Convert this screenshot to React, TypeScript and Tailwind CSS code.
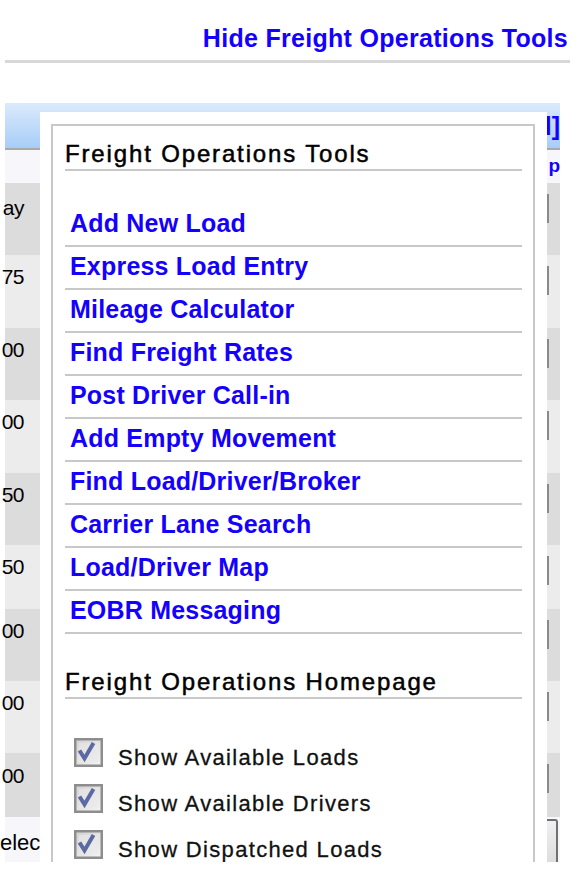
import React from "react";

const links = [
  "Add New Load",
  "Express Load Entry",
  "Mileage Calculator",
  "Find Freight Rates",
  "Post Driver Call-in",
  "Add Empty Movement",
  "Find Load/Driver/Broker",
  "Carrier Lane Search",
  "Load/Driver Map",
  "EOBR Messaging",
];

const checks = ["Show Available Loads", "Show Available Drivers", "Show Dispatched Loads"];

const rows = [
  { h: "h-[72px]", bg: "bg-[#dcdcdc]", pt: "pt-[14px]", t: "ay" },
  { h: "h-[73px]", bg: "bg-[#ececec]", pt: "pt-[11px]", t: "75" },
  { h: "h-[72px]", bg: "bg-[#dcdcdc]", pt: "pt-[11px]", t: "00" },
  { h: "h-[73px]", bg: "bg-[#ececec]", pt: "pt-[11px]", t: "00" },
  { h: "h-[72px]", bg: "bg-[#dcdcdc]", pt: "pt-[11px]", t: "50" },
  { h: "h-[64px]", bg: "bg-[#ececec]", pt: "pt-[11px]", t: "50" },
  { h: "h-[72px]", bg: "bg-[#dcdcdc]", pt: "pt-[11px]", t: "00" },
  { h: "h-[72px]", bg: "bg-[#ececec]", pt: "pt-[11px]", t: "00" },
  { h: "h-[64px]", bg: "bg-[#dcdcdc]", pt: "pt-[12px]", t: "00" },
];

function CheckBox() {
  return (
    <svg width="29" height="29" viewBox="0 0 29 29" className="shrink-0 block">
      <defs>
        <linearGradient id="cbg" x1="0" y1="0" x2="1" y2="1">
          <stop offset="0" stopColor="#d2d2d2" />
          <stop offset="1" stopColor="#f4f4f4" />
        </linearGradient>
      </defs>
      <rect x="1.25" y="1.25" width="26.5" height="26.5" fill="url(#cbg)" stroke="#8d8d8d" strokeWidth="2.5" />
      <rect x="5" y="5" width="19" height="19" fill="#e9e9e9" opacity="0.6" />
      <path d="M5.5 12.5 L10.5 20.5 L19.5 5" fill="none" stroke="#5c6aa4" strokeWidth="4" strokeLinejoin="miter" />
    </svg>
  );
}

export default function App() {
  return (
    <div className="w-[584px] h-[873px] bg-white overflow-hidden font-['Liberation_Sans',Arial,sans-serif]">
      <div className="relative h-[862px] overflow-hidden">
        <div className="flex justify-end pt-[26px] pr-[16px]">
          <a className="text-[25px] leading-[25px] font-bold text-[#1400ff] tracking-[0.3px] whitespace-nowrap">
            Hide Freight Operations Tools
          </a>
        </div>
        <div className="mt-[9px] ml-[5px] w-[565px] h-[3px] bg-[#d8d8d8]" />

        <div className="mt-[40px] ml-[5px] w-[555px]">
          <div className="h-[47px] bg-gradient-to-b from-[#dbeafc] to-[#a7cdf8] border-b-2 border-[#a9a9a9] flex justify-end">
            <div className="w-[13px] flex justify-end pt-[11px]">
              <span className="text-[25px] leading-[25px] font-bold text-[#1400ff] whitespace-nowrap">l]</span>
            </div>
          </div>
          <div className="h-[33px] bg-[#f6f6fb] flex justify-end">
            <div className="w-[13px] flex justify-end pt-[6px]">
              <span className="text-[19px] leading-[19px] font-bold text-[#1400ff] whitespace-nowrap">p</span>
            </div>
          </div>
          {rows.map((r, i) => (
            <div key={i} className={`${r.h} ${r.bg} flex`}>
              <div className={`w-[19px] flex justify-end ${r.pt}`}>
                <span className="text-[21px] leading-[21px] tracking-[-0.5px] text-black whitespace-nowrap">{r.t}</span>
              </div>
              <div className="flex-1" />
              <div className="w-[13px]">
                <div className="mt-[11px] w-[2px] h-[29px] bg-[#8a8a8a]" />
              </div>
            </div>
          ))}
          <div className="h-[45px] bg-[#f6f6fb] flex">
            <div className="w-[35px] pt-[15px] -ml-[5px]">
              <span className="text-[22px] leading-[22px] text-black whitespace-nowrap">elec</span>
            </div>
            <div className="flex-1" />
            <div className="w-[13px]">
              <div className="mt-[2px] w-[11px] h-[60px] rounded-r-[3px] border-2 border-l-0 border-[#707070] bg-gradient-to-b from-[#f0f0f0] to-[#d6d6d6]" />
            </div>
          </div>
        </div>

        <div className="absolute left-[40px] top-[112px] w-[507px] h-[800px] bg-white pl-[11px] pt-[12px] pr-[12px]">
          <div className="h-full border-2 border-[#c8c8c8] pl-[12px] pr-[11px]">
            <div className="mt-[16px] h-[29px] pb-[3px] border-b-2 border-[#c8c8c8]">
              <span className="inline-block text-[24px] leading-[24px] tracking-[1.85px] text-black whitespace-nowrap [-webkit-text-stroke:0.5px_black]">
                Freight Operations Tools
              </span>
            </div>
            <div className="mt-[33px] flex flex-col">
              {links.map((l) => (
                <div key={l} className="h-[43px] pt-[7px] pb-[9px] pl-[5px] border-b-2 border-[#c8c8c8]">
                  <a className="block text-[25px] leading-[25px] font-bold text-[#1400ff] tracking-[0.2px] whitespace-nowrap">
                    {l}
                  </a>
                </div>
              ))}
            </div>
            <div className="mt-[36px] h-[29px] pb-[3px] border-b-2 border-[#c8c8c8]">
              <span className="inline-block text-[24px] leading-[24px] tracking-[1.85px] text-black whitespace-nowrap [-webkit-text-stroke:0.5px_black]">
                Freight Operations Homepage
              </span>
            </div>
            <div className="mt-[39px] pl-[9px] flex flex-col gap-[15px]">
              {checks.map((c) => (
                <label key={c} className="flex items-start">
                  <CheckBox />
                  <span className="ml-[15px] mt-[9px] text-[22px] leading-[22px] tracking-[1.33px] text-[#111] whitespace-nowrap [-webkit-text-stroke:0.3px_#111]">
                    {c}
                  </span>
                </label>
              ))}
            </div>
          </div>
        </div>
      </div>
    </div>
  );
}
